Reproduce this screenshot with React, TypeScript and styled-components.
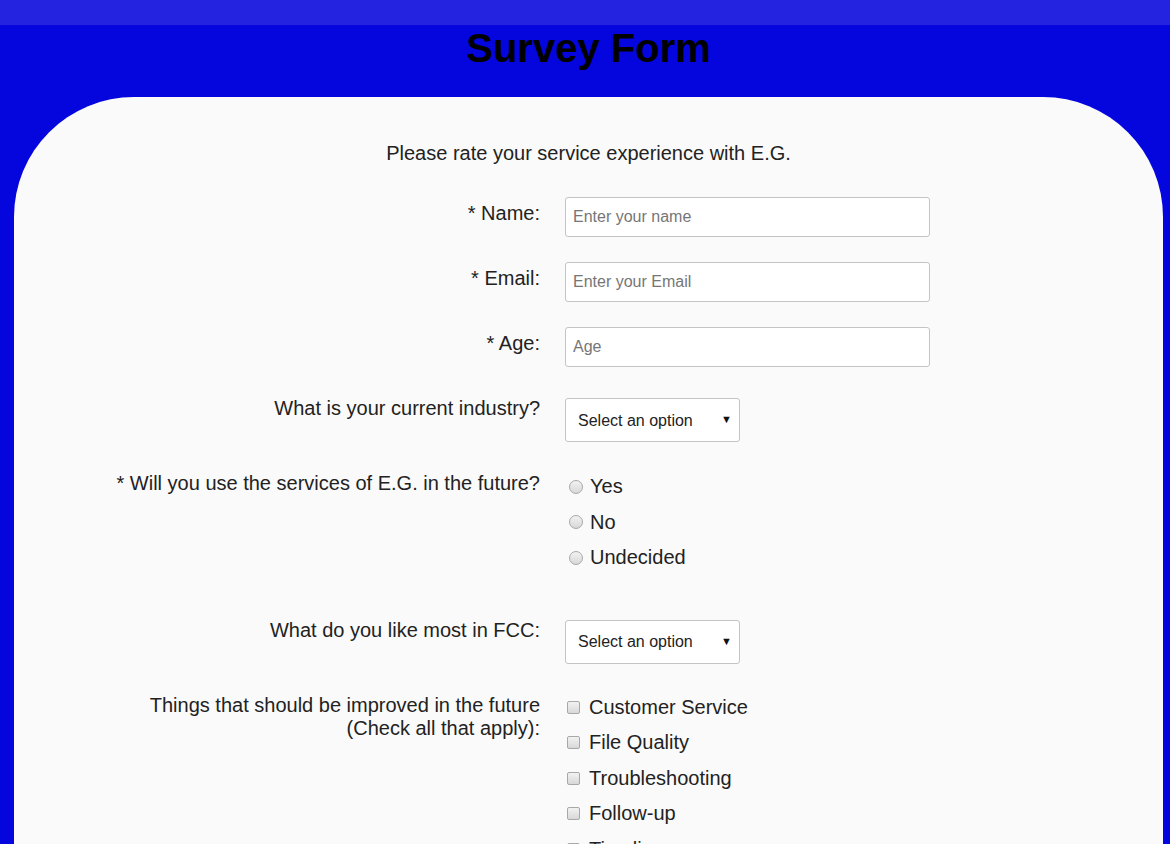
import { FC } from 'react';
import styled, { createGlobalStyle } from 'styled-components';

const GlobalStyle = createGlobalStyle`
  html, body {
    margin: 0;
    padding: 0;
    background: #0505de;
    font-family: "Liberation Sans", Arial, sans-serif;
  }
`;

const industries = ['Education', 'Healthcare', 'Technology', 'Finance', 'Other'];
const favourites = ['Challenges', 'Projects', 'Community', 'Open Source'];
const futureAnswers = ['Yes', 'No', 'Undecided'];
const improvements = [
  'Customer Service',
  'File Quality',
  'Troubleshooting',
  'Follow-up',
  'Timeliness',
  'Pricing',
];

type ChoiceProps = {
  kind: 'radio' | 'checkbox';
  name: string;
  label: string;
};

const Choice: FC<ChoiceProps> = (props) => {
  return (
    <ChoiceLabel>
      {props.kind === 'radio' ? (
        <RadioBox type="radio" name={props.name} value={props.label} />
      ) : (
        <CheckBox type="checkbox" name={props.name} value={props.label} />
      )}
      {props.label}
    </ChoiceLabel>
  );
};

type SelectProps = {
  name: string;
  options: string[];
};

const Dropdown: FC<SelectProps> = (props) => {
  return (
    <SelectWrap>
      <Select name={props.name} defaultValue="">
        <option value="" disabled>
          Select an option
        </option>
        {props.options.map((o) => (
          <option key={o} value={o}>
            {o}
          </option>
        ))}
      </Select>
      <Arrow>▼</Arrow>
    </SelectWrap>
  );
};

export default function App() {
  return (
    <>
      <GlobalStyle />
      <TopBar />
      <Page>
        <Title>Survey Form</Title>
        <Card>
          <Intro>Please rate your service experience with E.G.</Intro>
          <Form onSubmit={(e) => e.preventDefault()}>
            <Row>
              <Label htmlFor="name">* Name:</Label>
              <TextInput id="name" type="text" placeholder="Enter your name" />
            </Row>
            <Row>
              <Label htmlFor="email">* Email:</Label>
              <TextInput id="email" type="email" placeholder="Enter your Email" />
            </Row>
            <Row>
              <Label htmlFor="age">* Age:</Label>
              <TextInput id="age" type="number" placeholder="Age" />
            </Row>
            <Row>
              <Label>What is your current industry?</Label>
              <Dropdown name="industry" options={industries} />
            </Row>
            <Row $extra={13}>
              <Label>* Will you use the services of E.G. in the future?</Label>
              <Choices $offset={2}>
                {futureAnswers.map((a) => (
                  <Choice key={a} kind="radio" name="future" label={a} />
                ))}
              </Choices>
            </Row>
            <Row>
              <Label>What do you like most in FCC:</Label>
              <Dropdown name="favourite" options={favourites} />
            </Row>
            <Row>
              <Label>
                Things that should be improved in the future
                <br />
                (Check all that apply):
              </Label>
              <Choices $offset={1}>
                {improvements.map((i) => (
                  <Choice key={i} kind="checkbox" name="improve" label={i} />
                ))}
              </Choices>
            </Row>
            <Row>
              <Label htmlFor="comments">Any comments or suggestions?</Label>
              <TextArea id="comments" placeholder="Enter your comment here..." />
            </Row>
            <SubmitRow>
              <SubmitButton type="submit">Submit</SubmitButton>
            </SubmitRow>
          </Form>
        </Card>
      </Page>
    </>
  );
}

const TopBar = styled.div`
  height: 25px;
  background: #2424e0;
`;

const Page = styled.div`
  margin: 0 7px 0 14px;
`;

const Title = styled.h1`
  margin: 0;
  font-size: 40px;
  line-height: 46px;
  font-weight: bold;
  text-align: center;
  color: #000;
`;

const Card = styled.div`
  margin-top: 26px;
  padding: 45px 0 60px;
  background: #fafafa;
  border-radius: 120px 120px 0 0;
`;

const Intro = styled.p`
  margin: 0 0 32px;
  font-size: 20px;
  line-height: 23px;
  text-align: center;
  color: #222;
`;

const Form = styled.form`
  display: flex;
  flex-direction: column;
`;

const Row = styled.div<{ $extra?: number }>`
  display: grid;
  grid-template-columns: 526px 1fr;
  column-gap: 25px;
  align-items: start;
  margin-bottom: ${(p) => 25 + (p.$extra ?? 0)}px;
`;

const Label = styled.label`
  padding-top: 5px;
  font-size: 20px;
  line-height: 23px;
  text-align: right;
  color: #222;
`;

const TextInput = styled.input`
  box-sizing: border-box;
  width: 365px;
  height: 40px;
  padding: 0 7px;
  border: 1px solid #c4c4c4;
  border-radius: 3px;
  background: #fff;
  font-family: "Liberation Sans", Arial, sans-serif;
  font-size: 16px;
  color: #222;

  &::placeholder {
    color: #767676;
  }
`;

const TextArea = styled.textarea`
  box-sizing: border-box;
  width: 365px;
  height: 120px;
  padding: 8px 7px;
  border: 1px solid #c4c4c4;
  border-radius: 3px;
  font-family: "Liberation Sans", Arial, sans-serif;
  font-size: 16px;
  resize: vertical;
`;

const SelectWrap = styled.div`
  position: relative;
  width: 175px;
  margin-top: 6px;
`;

const Select = styled.select`
  appearance: none;
  box-sizing: border-box;
  width: 175px;
  height: 44px;
  padding: 0 28px 0 12px;
  border: 1px solid #c4c4c4;
  border-radius: 3px;
  background: #fff;
  font-family: "Liberation Sans", Arial, sans-serif;
  font-size: 16px;
  color: #222;
`;

const Arrow = styled.span`
  position: absolute;
  right: 8px;
  top: 14px;
  font-size: 11px;
  line-height: 14px;
  color: #111;
  pointer-events: none;
`;

const Choices = styled.div<{ $offset: number }>`
  display: flex;
  flex-direction: column;
  padding-top: ${(p) => p.$offset}px;
`;

const ChoiceLabel = styled.label`
  display: flex;
  align-items: center;
  height: 35.5px;
  font-size: 20px;
  color: #222;
`;

const RadioBox = styled.input`
  appearance: none;
  box-sizing: border-box;
  width: 14px;
  height: 14px;
  margin: 0 7px 0 4px;
  border: 1px solid #a8a8a8;
  border-radius: 50%;
  background: linear-gradient(#f2f2f2, #d8d8d8);

  &:checked {
    background: radial-gradient(#333 30%, #e8e8e8 40%);
  }
`;

const CheckBox = styled.input`
  appearance: none;
  box-sizing: border-box;
  width: 13px;
  height: 13px;
  margin: 0 9px 0 2px;
  border: 1px solid #a8a8a8;
  border-radius: 2px;
  background: linear-gradient(#f2f2f2, #d8d8d8);

  &:checked {
    background: #555;
  }
`;

const SubmitRow = styled.div`
  display: flex;
  justify-content: center;
`;

const SubmitButton = styled.button`
  width: 200px;
  height: 44px;
  border: none;
  border-radius: 3px;
  background: #0505de;
  color: #fff;
  font-family: "Liberation Sans", Arial, sans-serif;
  font-size: 18px;
`;
